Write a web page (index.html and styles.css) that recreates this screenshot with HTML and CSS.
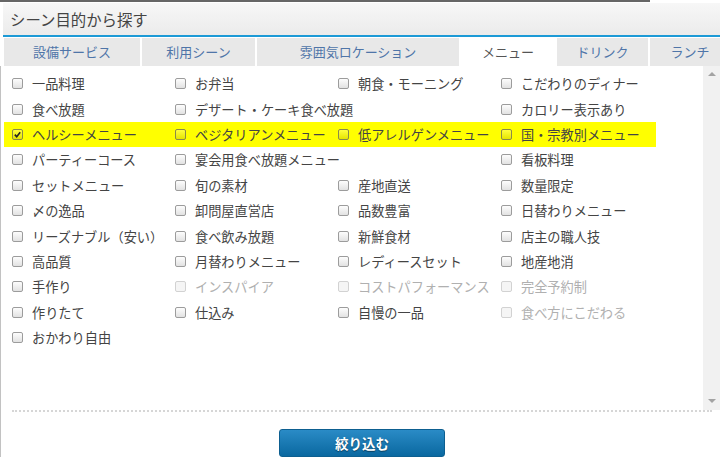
FILE: index.html
```html
<!DOCTYPE html>
<html lang="ja">

<head>
	<meta charset="UTF-8">
	<title>シーン目的から探す</title>
	<link rel="stylesheet" href="styles.css">
</head>

<body>
	<div class="topbar"><span class="topbar-dark"></span></div>
	<div class="dialog">
		<div class="dialog-head">シーン目的から探す</div>
		<ul class="tabs">
			<li class="tab t1">設備サービス</li>
			<li class="tab t2">利用シーン</li>
			<li class="tab t3">雰囲気ロケーション</li>
			<li class="tab t4 active">メニュー</li>
			<li class="tab t5">ドリンク</li>
			<li class="tab t6">ランチ</li>
		</ul>
		<div class="panel">
			<div class="list-wrap">
				<ul class="options">
					<li class="opt"><span class="cb"></span>一品料理</li>
					<li class="opt"><span class="cb"></span>お弁当</li>
					<li class="opt"><span class="cb"></span>朝食・モーニング</li>
					<li class="opt"><span class="cb"></span>こだわりのディナー</li>

					<li class="opt"><span class="cb"></span>食べ放題</li>
					<li class="opt wide"><span class="cb"></span>デザート・ケーキ食べ放題</li>
					<li class="opt"><span class="cb"></span>カロリー表示あり</li>

					<li class="opt hl"><span class="cb checked"><svg viewBox="0 0 10 10" width="9" height="9"><path d="M2 5.2 L4.1 7.4 L8 2.6" fill="none" stroke="#222" stroke-width="1.8"/></svg></span>ヘルシーメニュー</li>
					<li class="opt hl"><span class="cb"></span>ベジタリアンメニュー</li>
					<li class="opt hl"><span class="cb"></span>低アレルゲンメニュー</li>
					<li class="opt hl"><span class="cb"></span>国・宗教別メニュー</li>

					<li class="opt"><span class="cb"></span>パーティーコース</li>
					<li class="opt wide"><span class="cb"></span>宴会用食べ放題メニュー</li>
					<li class="opt"><span class="cb"></span>看板料理</li>

					<li class="opt"><span class="cb"></span>セットメニュー</li>
					<li class="opt"><span class="cb"></span>旬の素材</li>
					<li class="opt"><span class="cb"></span>産地直送</li>
					<li class="opt"><span class="cb"></span>数量限定</li>

					<li class="opt"><span class="cb"></span>〆の逸品</li>
					<li class="opt"><span class="cb"></span>卸問屋直営店</li>
					<li class="opt"><span class="cb"></span>品数豊富</li>
					<li class="opt"><span class="cb"></span>日替わりメニュー</li>

					<li class="opt"><span class="cb"></span>リーズナブル（安い）</li>
					<li class="opt"><span class="cb"></span>食べ飲み放題</li>
					<li class="opt"><span class="cb"></span>新鮮食材</li>
					<li class="opt"><span class="cb"></span>店主の職人技</li>

					<li class="opt"><span class="cb"></span>高品質</li>
					<li class="opt"><span class="cb"></span>月替わりメニュー</li>
					<li class="opt"><span class="cb"></span>レディースセット</li>
					<li class="opt"><span class="cb"></span>地産地消</li>

					<li class="opt"><span class="cb"></span>手作り</li>
					<li class="opt disabled"><span class="cb"></span>インスパイア</li>
					<li class="opt disabled"><span class="cb"></span>コストパフォーマンス</li>
					<li class="opt disabled"><span class="cb"></span>完全予約制</li>

					<li class="opt"><span class="cb"></span>作りたて</li>
					<li class="opt"><span class="cb"></span>仕込み</li>
					<li class="opt"><span class="cb"></span>自慢の一品</li>
					<li class="opt disabled"><span class="cb"></span>食べ方にこだわる</li>

					<li class="opt"><span class="cb"></span>おかわり自由</li>
				</ul>
				<div class="scrollbar">
					<span class="arrow up"></span>
					<span class="arrow down"></span>
				</div>
			</div>
			<div class="divider"></div>
			<div class="actions">
				<button class="btn-filter">絞り込む</button>
			</div>
		</div>
	</div>
</body>

</html>
```

FILE: styles.css
```css
html, body {
    margin: 0;
    padding: 0;
    height: 475px;
    overflow: hidden;
}
body {
    font-family: "Noto Sans CJK JP", "Liberation Sans", sans-serif;
    background-color: #fff;
    color: #444;
}
.topbar {
    height: 3px;
    background-color: #fff;
}
.topbar-dark {
    display: block;
    width: 650px;
    height: 2px;
    background-color: #666;
}
.dialog-head {
    margin-left: 3px;
    height: 32px;
    line-height: 32px;
    padding-left: 7px;
    font-size: 15.4px;
    color: #444;
    background: linear-gradient(#f7f7f7, #ebebeb);
    border-bottom: 2px solid #1c9ad6;
}
.tabs {
    list-style: none;
    margin: 1px 0 0 4px;
    padding: 0;
    display: flex;
    gap: 2px;
    height: 28px;
    overflow: hidden;
}
.tab {
    flex: none;
    background-color: #e8e8e8;
    color: #4f75a8;
    font-size: 13px;
    line-height: 28px;
    text-align: center;
    white-space: nowrap;
}
.tab.active {
    background-color: #fff;
    color: #555;
}
.t1 { width: 136px; }
.t2 { width: 113px; }
.t3 { width: 202px; }
.t4 { width: 94px; }
.t5 { width: 91px; }
.t6 { width: 80px; }
.panel {
    border-left: 1px solid #c2c2c2;
}
.list-wrap {
    display: flex;
    height: 344px;
    padding-left: 3px;
}
.options {
    flex: 1;
    list-style: none;
    margin: 0;
    padding: 5px 0 0;
    display: grid;
    grid-template-columns: repeat(4, 163px);
    grid-auto-rows: 25.4px;
    align-content: start;
}
.opt {
    display: flex;
    align-items: center;
    padding-left: 8px;
    font-size: 13.2px;
    white-space: nowrap;
    color: #444;
}
.opt.wide {
    grid-column: span 2;
}
.opt.hl {
    background-color: #ffff00;
}
.opt.disabled {
    color: #b0b0b0;
}
.cb {
    flex: none;
    box-sizing: border-box;
    width: 11px;
    height: 11px;
    margin-right: 9px;
    border: 1px solid #9c9c9c;
    border-radius: 2px;
    background: linear-gradient(#fdfdfd, #e2e2e2);
    display: flex;
    align-items: center;
    justify-content: center;
}
.hl .cb {
    border-color: #8a8a4a;
    background: linear-gradient(rgba(255,255,255,0.25), rgba(0,0,0,0.1));
}
.disabled .cb {
    border-color: #d2d2d2;
    background: #f5f5f5;
}
.scrollbar {
    flex: none;
    width: 17px;
    background-color: #f1f1f1;
    display: flex;
    flex-direction: column;
    justify-content: space-between;
    align-items: center;
    padding: 6px 0 7px;
    box-sizing: border-box;
}
.arrow {
    width: 0;
    height: 0;
    border-left: 4px solid transparent;
    border-right: 4px solid transparent;
}
.arrow.up { border-bottom: 4px solid #a3a3a3; }
.arrow.down { border-top: 4px solid #a3a3a3; }
.divider {
    margin: 0 8px 0 11px;
    border-top: 2px dotted #d6d6d6;
}
.actions {
    padding-top: 17px;
    padding-left: 278px;
}
.btn-filter {
    width: 166px;
    height: 28px;
    border: 1px solid #0d5f90;
    border-radius: 3px;
    background: linear-gradient(#2a8bc6, #0a68a0);
    color: #fff;
    font-family: "Noto Sans CJK JP", sans-serif;
    font-size: 13.5px;
    font-weight: bold;
    text-shadow: 0 1px 1px rgba(0,0,0,0.45);
    cursor: pointer;
    padding: 0;
}
```
